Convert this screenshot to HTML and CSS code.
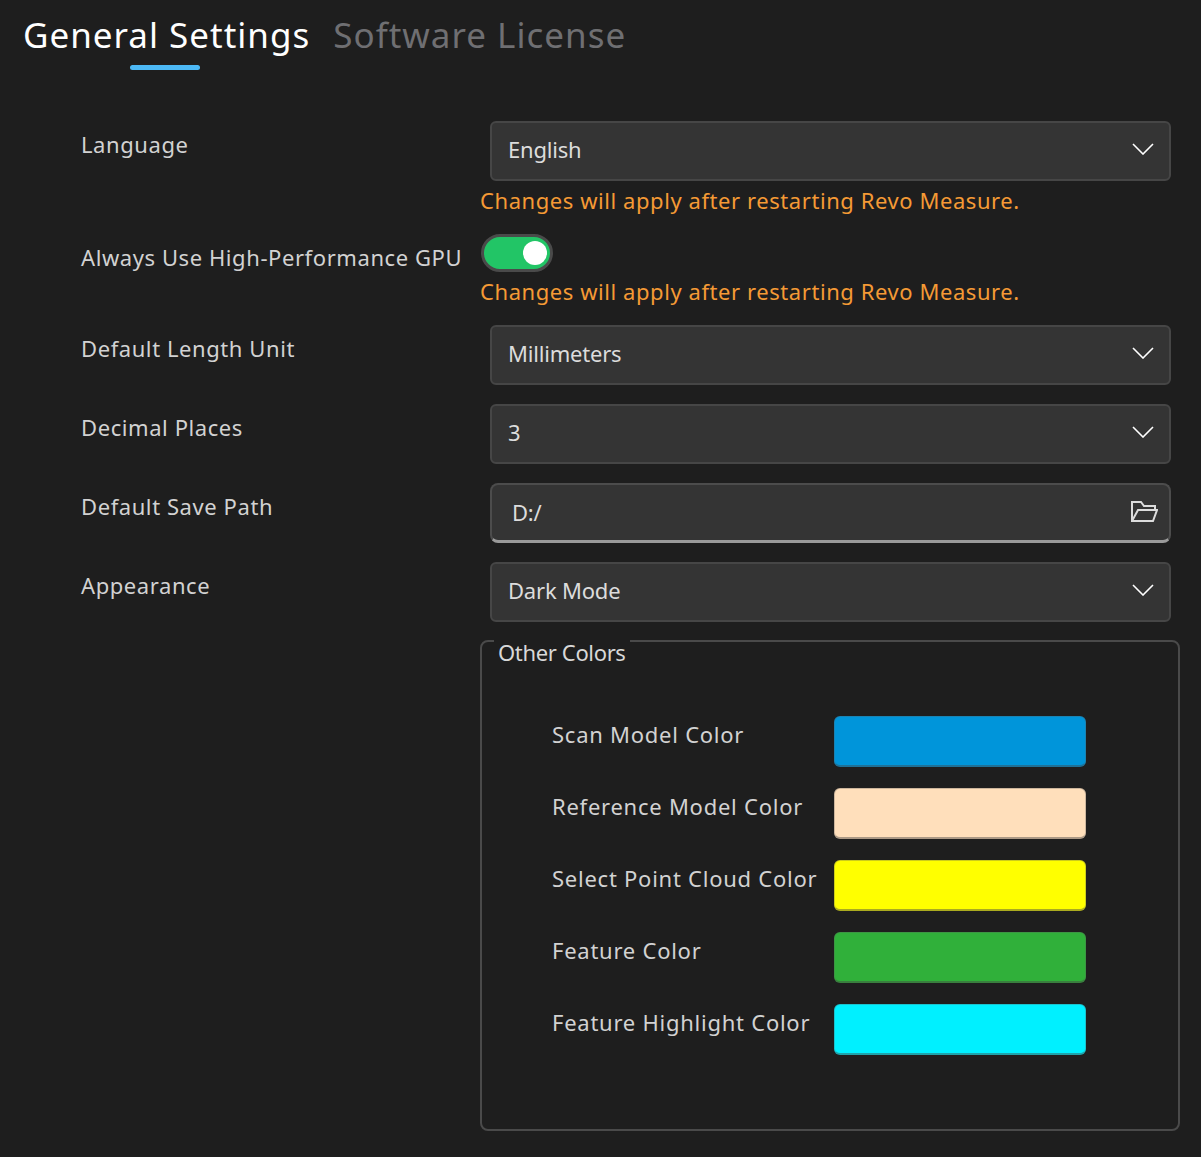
FILE: index.html
```html
<!DOCTYPE html>
<html lang="en">
<head>
    <meta charset="UTF-8">
    <meta name="viewport" content="width=device-width, initial-scale=1.0">
    <title>Settings</title>
    <link rel="stylesheet" href="styles.css">
</head>
<body>
    <div class="tabs">
        <div class="tab active">General Settings</div>
        <div class="tab">Software License</div>
    </div>

    <div class="settings">
        <div class="row row-select">
            <div class="label">Language</div>
            <div class="select"><span>English</span>
                <svg class="chevron" viewBox="0 0 22 12"><path d="M1 1l10 10L21 1"/></svg>
            </div>
        </div>
        <div class="note">Changes will apply after restarting Revo Measure.</div>

        <div class="row row-toggle">
            <div class="label">Always Use High-Performance GPU</div>
            <div class="toggle"><div class="knob"></div></div>
        </div>
        <div class="note note-gpu">Changes will apply after restarting Revo Measure.</div>

        <div class="row row-select">
            <div class="label">Default Length Unit</div>
            <div class="select"><span>Millimeters</span>
                <svg class="chevron" viewBox="0 0 22 12"><path d="M1 1l10 10L21 1"/></svg>
            </div>
        </div>
        <div class="row row-select">
            <div class="label">Decimal Places</div>
            <div class="select"><span>3</span>
                <svg class="chevron" viewBox="0 0 22 12"><path d="M1 1l10 10L21 1"/></svg>
            </div>
        </div>
        <div class="row row-select">
            <div class="label">Default Save Path</div>
            <div class="select path"><span>D:/</span>
                <svg class="folder" viewBox="0 0 27 21"><path d="M1 20V1h9l3 4h11v4M1 20h21l4-11H7L1 20z"/></svg>
            </div>
        </div>
        <div class="row row-select">
            <div class="label">Appearance</div>
            <div class="select"><span>Dark Mode</span>
                <svg class="chevron" viewBox="0 0 22 12"><path d="M1 1l10 10L21 1"/></svg>
            </div>
        </div>

        <div class="group">
            <div class="group-title">Other Colors</div>
            <div class="color-list">
                <div class="color-row">
                    <div class="label">Scan Model Color</div>
                    <div class="swatch swatch-scan"></div>
                </div>
                <div class="color-row">
                    <div class="label">Reference Model Color</div>
                    <div class="swatch swatch-reference"></div>
                </div>
                <div class="color-row">
                    <div class="label">Select Point Cloud Color</div>
                    <div class="swatch swatch-select"></div>
                </div>
                <div class="color-row">
                    <div class="label">Feature Color</div>
                    <div class="swatch swatch-feature"></div>
                </div>
                <div class="color-row">
                    <div class="label">Feature Highlight Color</div>
                    <div class="swatch swatch-highlight"></div>
                </div>
            </div>
        </div>
    </div>
</body>
</html>
```

FILE: styles.css
```css
* {
    box-sizing: border-box;
}

body {
    margin: 0;
    height: 1157px;
    overflow: hidden;
    background: #1e1e1e;
    color: #d2d2d2;
    font-family: "Noto Sans", "Open Sans", sans-serif;
    font-size: 22px;
}

.tabs {
    display: flex;
    gap: 23px;
    height: 121px;
    padding: 9px 0 0 23px;
}

.tab {
    position: relative;
    height: 52px;
    font-size: 35px;
    line-height: 52px;
    letter-spacing: 1px;
    color: #6f6f72;
}

.tab.active {
    color: #fff;
}

.tab.active::after {
    content: "";
    position: absolute;
    left: 107px;
    top: 56px;
    width: 70px;
    height: 5px;
    border-radius: 3px;
    background: #4cb8f5;
}

.row {
    display: flex;
    padding-left: 81px;
}

.row-select {
    height: 60px;
    margin-bottom: 19px;
}

.row-select:first-child {
    margin-bottom: 0;
}

.label {
    line-height: 30px;
    letter-spacing: 0.58px;
    white-space: nowrap;
}

.row .label {
    width: 409px;
    padding-top: 8px;
}

.select {
    display: flex;
    align-items: center;
    justify-content: space-between;
    width: 681px;
    height: 60px;
    padding: 0 15px 4px 16px;
    background: #343434;
    border: 2px solid #464646;
    border-radius: 6px;
    letter-spacing: -0.2px;
    color: #dcdcdc;
}

.chevron {
    width: 22px;
    height: 12px;
    fill: none;
    stroke: #fff;
    stroke-width: 1.6;
}

.path {
    padding: 0 11px 2px 20px;
    border-color: #4c4c4c;
    border-bottom-color: #9a9a9a;
    border-width: 2px 2px 3px;
    border-radius: 8px;
}

.folder {
    width: 27px;
    height: 21px;
    fill: none;
    stroke: #dcdcdc;
    stroke-width: 2;
}

.note {
    height: 53px;
    padding: 4px 0 0 480px;
    line-height: 30px;
    letter-spacing: 0.57px;
    color: #f59a35;
}

.note-gpu {
    height: 54px;
    padding-top: 5px;
}

.row-toggle {
    height: 37px;
}

.row-toggle .label {
    width: 400px;
}

.toggle {
    display: flex;
    align-items: center;
    justify-content: flex-end;
    width: 72px;
    height: 38px;
    padding-right: 3px;
    background: #22c566;
    border: 3px solid #4a4a4a;
    border-radius: 19px;
}

.knob {
    width: 24px;
    height: 24px;
    border-radius: 50%;
    background: #fff;
}

.group {
    width: 700px;
    height: 491px;
    margin: -1px 0 0 480px;
    border: 2px solid #4a4a4a;
    border-radius: 8px;
}

.group-title {
    width: fit-content;
    height: 30px;
    margin: -2px 0 0 12px;
    padding: 0 4px;
    background: #1e1e1e;
    line-height: 24px;
    letter-spacing: -0.35px;
    color: #d8d8d8;
}

.color-list {
    display: flex;
    flex-direction: column;
    gap: 21px;
    padding: 46px 0 0 70px;
}

.color-row {
    display: flex;
    height: 51px;
}

.color-row .label {
    width: 282px;
    padding-top: 3px;
    letter-spacing: 0.75px;
}

.swatch {
    width: 252px;
    height: 51px;
    border-radius: 6px;
    border: 1px solid rgba(90, 90, 90, 0.3);
    border-bottom: 2px solid rgba(70, 70, 70, 0.45);
}

.swatch-scan { background-color: #0095da; }
.swatch-reference { background-color: #ffdfbb; }
.swatch-select { background-color: #ffff00; }
.swatch-feature { background-color: #30b03a; }
.swatch-highlight { background-color: #00f0ff; }
```
